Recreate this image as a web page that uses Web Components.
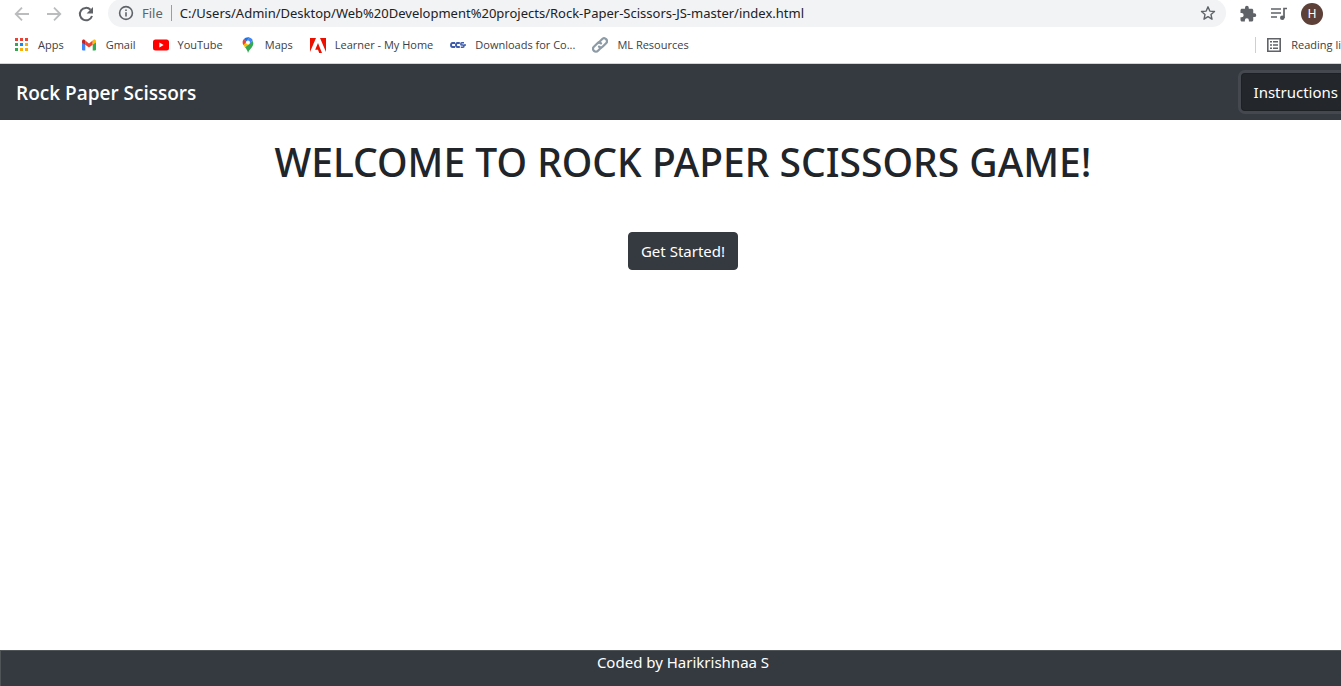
<!DOCTYPE html>
<html lang="en">
<head>
<meta charset="utf-8">
<title>Rock Paper Scissors</title>
<style>
  html, body { margin: 0; }
  body { font-family: "Noto Sans", "Open Sans", sans-serif; color: #212529; background: #fff; }
</style>
</head>
<body>
<game-window>
  <browser-toolbar slot="chrome" url="C:/Users/Admin/Desktop/Web%20Development%20projects/Rock-Paper-Scissors-JS-master/index.html"></browser-toolbar>
  <bookmarks-bar slot="chrome">
    <bookmark-link>
      <svg slot="icon" viewBox="0 0 16 16"><path fill="#ea4335" d="M2 1h3v3H2zM7 1h3v3H7zM12 1h3v3h-3z"/><path fill="#34a853" d="M2 6h3v3H2zM2 11h3v3H2z"/><path fill="#1a86e8" d="M7 6h3v3H7z"/><path fill="#fbaf04" d="M12 6h3v3h-3zM7 11h3v3H7zM12 11h3v3h-3z"/></svg>
      Apps
    </bookmark-link>
    <bookmark-link>
      <svg slot="icon" viewBox="0 0 16 16"><path fill="#4285f4" d="M1 4.500l3.300 2.500v6.500H2a1 1 0 0 1-1-1z"/><path fill="#34a853" d="M11.700 7L15 4.500v8a1 1 0 0 1-1 1h-2.300z"/><path fill="#ea4335" d="M4.300 3.500L8 6.400l3.700-2.900V7.800L8 10.600 4.300 7.800z"/><path fill="#c5221f" d="M1 4.300C1 2.800 2.600 2.100 3.700 3l.6.500v4.300L1 5.400z"/><path fill="#fbbc04" d="M15 4.300c0-1.500-1.600-2.200-2.700-1.300l-.6.500v4.300L15 5.400z"/></svg>
      Gmail
    </bookmark-link>
    <bookmark-link>
      <svg slot="icon" viewBox="0 0 16 16"><rect y="2.500" width="16" height="11" rx="2.500" fill="#f00"/><path fill="#fff" d="M6.400 5.600v4.800L10.600 8z"/></svg>
      YouTube
    </bookmark-link>
    <bookmark-link>
      <svg slot="icon" viewBox="0 0 16 16"><path fill="#34a853" d="M8 16c-.5-2.600-1.500-3.900-3-5.800l7.500-6.400c1.400 2.300 1 4.300-.6 6.400C10.200 12.300 8.700 13.500 8 16z"/><path fill="#fbbc04" d="M5 10.200C4 9 3.200 8 2.800 6.800L6.500 3l3.600 3.600z"/><path fill="#ea4335" d="M3.700 2.300L6.500 4.700 3.300 8C2.100 5.800 2.500 3.700 3.700 2.300z"/><path fill="#1a73e8" d="M3.700 2.300C5 .6 7.400-.2 9.600.4L6.300 4.500z"/><path fill="#4285f4" d="M9.600.4c1.400.4 2.500 1.400 3.200 2.800L9.500 7 6.300 4.500z"/><circle cx="8" cy="5.500" r="2" fill="#fff"/></svg>
      Maps
    </bookmark-link>
    <bookmark-link>
      <svg slot="icon" viewBox="0 0 16 16"><path fill="#eb1000" d="M0 1h6L0 15zM10 1h6v14zM8 6l4 10H9.200L8 12.800H5.200z"/></svg>
      Learner - My Home
    </bookmark-link>
    <bookmark-link>
      <svg slot="icon" viewBox="0 0 16 16"><g fill="none" stroke="#3c5bab" stroke-width="1.900"><path d="M5 6H2.600Q1 6 1 8t1.600 2H5M9.800 6H7.600Q6 6 6 8t1.600 2h2.200"/><path stroke-width="1.500" d="M14 5.800h-2.200q-1 0-1 1.100t1 1.100h1.200q1 0 1 1.100t-1 1.100h-2.200M14 8h2"/></g></svg>
      Downloads for Co...
    </bookmark-link>
    <bookmark-link>
      <svg slot="icon" viewBox="0 0 16 16"><g fill="none" stroke="#8d9ba6" stroke-width="2.200" stroke-linecap="round"><path d="M7 5.200l3-3a2.800 2.800 0 0 1 4.100 4L10.800 9.500A2.700 2.700 0 0 1 7 9.600"/><path d="M9 10.800l-3 3a2.800 2.800 0 0 1-4.100-4L5.200 6.500A2.700 2.700 0 0 1 9 6.400"/></g></svg>
      ML Resources
    </bookmark-link>
    <bookmark-link slot="end">
      <svg slot="icon" viewBox="0 0 16 16"><path fill="none" stroke="#5f6368" stroke-width="1.600" d="M1.800 1.800h12.400v12.400H1.800z"/><path fill="#5f6368" d="M4 4h2v1.600H4zM7 4h5v1.600H7zM4 7.200h2v1.600H4zM7 7.200h5v1.600H7zM4 10.400h2V12H4zM7 10.400h5V12H7z"/></svg>
      Reading li
    </bookmark-link>
  </bookmarks-bar>
  <site-navbar>
    Rock Paper Scissors
    <dark-button slot="action" class="active">Instructions</dark-button>
  </site-navbar>
  <welcome-panel>
    <span slot="title">WELCOME TO ROCK PAPER SCISSORS GAME!</span>
    <dark-button>Get Started!</dark-button>
  </welcome-panel>
  <site-footer>Coded by Harikrishnaa S</site-footer>
</game-window>

<script>
function define(name, html, setup) {
  const template = document.createElement('template');
  template.innerHTML = html;
  customElements.define(name, class extends HTMLElement {
    constructor() {
      super();
      this.attachShadow({ mode: 'open' }).append(template.content.cloneNode(true));
    }
    connectedCallback() { if (setup) setup(this, this.shadowRoot); }
  });
}

define('game-window', `
  <style>
    :host { display: flex; flex-direction: column; min-height: 100vh; }
    header { border-bottom: 1px solid #d3d5d8; }
  </style>
  <header><slot name="chrome"></slot></header>
  <slot></slot>`);

define('browser-toolbar', `
  <style>
    :host { display: flex; align-items: center; height: 27px; padding: 0 18px 0 14px; color: #5f6368; }
    button { display: flex; padding: 0; border: 0; background: none; color: inherit; flex: none; }
    svg { display: block; width: 16px; height: 16px; }
    nav { display: flex; gap: 16px; margin-right: 14px; }
    button:disabled { color: #babcbe; }
    .box { flex: 1; display: flex; align-items: center; min-width: 0; height: 28px; margin-top: -1px; padding: 0 10px; border-radius: 14px; background: #f1f3f4; }
    label { display: flex; align-items: center; gap: 8px; font-size: 13px; line-height: 16px; padding-right: 8px; border-right: 1px solid #9a9da1; }
    input { flex: 1; min-width: 0; height: 20px; padding: 0; margin-left: 8px; border: 0; outline: 0; background: none; font: 13px "Noto Sans", sans-serif; color: #202124; }
    .tools { display: flex; align-items: center; gap: 13px; margin-left: 13px; }
    .tools svg { width: 18px; height: 18px; }
    .avatar { width: 22px; height: 22px; border-radius: 50%; background: #5d4037; color: #fff; align-items: center; justify-content: center; font: 12px Roboto, sans-serif; }
  </style>
  <nav>
    <button disabled aria-label="Back"><svg viewBox="0 0 16 16"><path fill="none" stroke="currentColor" stroke-width="1.800" d="M15 8H2M8 1.700L1.700 8 8 14.300"/></svg></button>
    <button disabled aria-label="Forward"><svg viewBox="0 0 16 16"><path fill="none" stroke="currentColor" stroke-width="1.800" d="M1 8h13M8 1.700L14.300 8 8 14.300"/></svg></button>
    <button aria-label="Reload"><svg viewBox="0 0 16 16"><path fill="none" stroke="currentColor" stroke-width="2" d="M14 10A6.200 6.200 0 1 1 12.500 3.700"/><path fill="currentColor" d="M15 1v6.400H8.600z"/></svg></button>
  </nav>
  <div class="box">
    <label for="url"><svg viewBox="0 0 16 16"><circle cx="8" cy="8" r="6.400" fill="none" stroke="currentColor" stroke-width="1.600"/><path fill="currentColor" d="M7.200 7.200h1.600v4.200H7.200zM7.200 4.500h1.600V6H7.200z"/></svg>File</label>
    <input id="url" type="text" spellcheck="false">
    <button aria-label="Bookmark this page"><svg viewBox="0 0 16 16"><path fill="none" stroke="currentColor" stroke-width="1.400" stroke-linejoin="round" d="M8 1.800l1.800 4.300 4.700.4-3.500 3.100 1 4.600L8 11.700l-4 2.500 1-4.600-3.500-3.100 4.700-.4z"/></svg></button>
  </div>
  <div class="tools">
    <button aria-label="Extensions"><svg viewBox="0 0 24 24"><path fill="currentColor" d="M20.500 11H19V7c0-1.100-.9-2-2-2h-4V3.500a2.500 2.500 0 0 0-5 0V5H4c-1.100 0-2 .9-2 2v3.800h1.500a2.700 2.700 0 0 1 0 5.400H2V20c0 1.100.9 2 2 2h3.800v-1.500a2.700 2.700 0 0 1 5.400 0V22H17c1.100 0 2-.9 2-2v-4h1.500a2.500 2.500 0 0 0 0-5z"/></svg></button>
    <button aria-label="Media controls"><svg viewBox="0 0 18 18"><path fill="none" stroke="currentColor" stroke-width="1.700" d="M1 4h10M1 8h10M1 12h6M17 3.500h-3V13"/><circle cx="12.300" cy="12.800" r="2.300" fill="currentColor"/></svg></button>
    <button class="avatar" aria-label="Profile">H</button>
  </div>`,
  (host, root) => { root.querySelector('input').value = host.getAttribute('url'); });

define('bookmarks-bar', `
  <style>
    :host { display: flex; justify-content: space-between; align-items: center; height: 36px; padding-left: 13px; font: 11px/16px "Open Sans", sans-serif; color: #3c4043; white-space: nowrap; }
    div { display: flex; gap: 17px; }
    .end { border-left: 1px solid #cdcfd2; padding-left: 10px; }
  </style>
  <div><slot></slot></div>
  <div class="end"><slot name="end"></slot></div>`);

define('bookmark-link', `
  <style>
    :host { display: block; }
    a { display: flex; align-items: center; gap: 8px; color: inherit; text-decoration: none; }
    ::slotted(svg) { display: block; width: 16px; height: 16px; }
  </style>
  <a href="#"><slot name="icon"></slot><span><slot></slot></span></a>`.replace('gap: 8px', 'gap: 9px'));

define('dark-button', `
  <style>
    :host { display: block; }
    button { display: block; height: 38px; padding: 0 12px; border: 1px solid #343a40; border-radius: 4px; background: #343a40; color: #fff; font: 15px/24px "Noto Sans", sans-serif; white-space: nowrap; }
    :host(.active) button { padding-right: 3px; border-right: 0; border-radius: 4px 0 0 4px; background: #23272b; border-color: #1d2124; box-shadow: 0 0 0 3px #45494f; }
  </style>
  <button type="button"><slot></slot></button>`);

define('site-navbar', `
  <style>
    :host { display: block; overflow: hidden; }
    nav { display: flex; align-items: center; justify-content: space-between; height: 56px; padding-left: 16px; background: #343a40; }
    a { color: #fff; text-decoration: none; font: 600 19px/32px "Open Sans", sans-serif; padding-top: 2px; }
  </style>
  <nav><a href="#"><slot></slot></a><slot name="action"></slot></nav>`);

define('welcome-panel', `
  <style>
    :host { flex: 1; display: flex; flex-direction: column; align-items: center; gap: 46px; padding: 18px 0 0 25px; }
    h1 { margin: 0; font-size: 39px; line-height: 48px; font-weight: 500; text-align: center; }
  </style>
  <h1><slot name="title"></slot></h1>
  <slot></slot>`);

define('site-footer', `
  <style>
    :host { display: block; }
    footer { box-sizing: border-box; height: 36px; padding-left: 24px; border: solid #4f5557; border-width: 1px 0 0 1px; background: #343a40; color: #fff; font-size: 15px; line-height: 22px; text-align: center; }
  </style>
  <footer><slot></slot></footer>`);
</script>
</body>
</html>
